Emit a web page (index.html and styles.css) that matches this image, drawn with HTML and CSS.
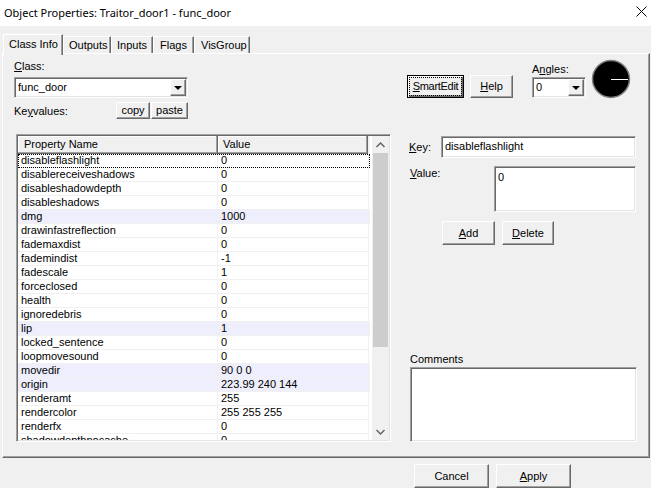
FILE: index.html
```html
<!DOCTYPE html>
<html>
<head>
<meta charset="utf-8">
<link rel="stylesheet" href="styles.css">
</head>
<body>
<div class="window">
  <div class="titlebar">
    <span class="title">Object Properties: Traitor_door1 - func_door</span>
    <svg class="close" width="11" height="11" viewBox="0 0 11 11"><path d="M0.5 0.5 L10.5 10.5 M10.5 0.5 L0.5 10.5" stroke="#000" stroke-width="1" fill="none"/></svg>
  </div>
  <div class="tabs">
    <div class="tab active">Class Info</div>
    <div class="tab">Outputs</div>
    <div class="tab">Inputs</div>
    <div class="tab">Flags</div>
    <div class="tab">VisGroup</div>
  </div>
  <div class="page">
    <div class="leftcol">
      <div class="lbl"><u>C</u>lass:</div>
      <div class="combo classcombo"><span class="combo-text">func_door</span><span class="dropbtn"><span class="tri"></span></span></div>
      <div class="kvrow">
        <div class="kvlabel">Ke<u>y</u>values:</div>
        <div class="btn small copy">copy</div>
        <div class="btn small paste">paste</div>
      </div>
      <div class="list">
        <div class="listmain">
          <div class="header">
            <div class="hcell hname">Property Name</div>
            <div class="hcell hvalue">Value</div>
          </div>
          <div class="rows">
            <div class="row focus"><div class="c1">disableflashlight</div><div class="c2">0</div></div>
            <div class="row"><div class="c1">disablereceiveshadows</div><div class="c2">0</div></div>
            <div class="row"><div class="c1">disableshadowdepth</div><div class="c2">0</div></div>
            <div class="row"><div class="c1">disableshadows</div><div class="c2">0</div></div>
            <div class="row hl"><div class="c1">dmg</div><div class="c2">1000</div></div>
            <div class="row"><div class="c1">drawinfastreflection</div><div class="c2">0</div></div>
            <div class="row"><div class="c1">fademaxdist</div><div class="c2">0</div></div>
            <div class="row"><div class="c1">fademindist</div><div class="c2">-1</div></div>
            <div class="row"><div class="c1">fadescale</div><div class="c2">1</div></div>
            <div class="row"><div class="c1">forceclosed</div><div class="c2">0</div></div>
            <div class="row"><div class="c1">health</div><div class="c2">0</div></div>
            <div class="row"><div class="c1">ignoredebris</div><div class="c2">0</div></div>
            <div class="row hl"><div class="c1">lip</div><div class="c2">1</div></div>
            <div class="row"><div class="c1">locked_sentence</div><div class="c2">0</div></div>
            <div class="row"><div class="c1">loopmovesound</div><div class="c2">0</div></div>
            <div class="row hl"><div class="c1">movedir</div><div class="c2">90 0 0</div></div>
            <div class="row hl"><div class="c1">origin</div><div class="c2">223.99 240 144</div></div>
            <div class="row"><div class="c1">renderamt</div><div class="c2">255</div></div>
            <div class="row"><div class="c1">rendercolor</div><div class="c2">255 255 255</div></div>
            <div class="row"><div class="c1">renderfx</div><div class="c2">0</div></div>
            <div class="row"><div class="c1">shadowdepthnocache</div><div class="c2">0</div></div>
          </div>
        </div>
        <div class="vscroll">
          <div class="sarrow"><svg width="9" height="6" viewBox="0 0 9 6"><path d="M0.5 5 L4.5 1 L8.5 5" stroke="#606060" stroke-width="1.4" fill="none"/></svg></div>
          <div class="strack"><div class="thumb"></div></div>
          <div class="sarrow"><svg width="9" height="6" viewBox="0 0 9 6"><path d="M0.5 1 L4.5 5 L8.5 1" stroke="#606060" stroke-width="1.4" fill="none"/></svg></div>
        </div>
      </div>
    </div>
    <div class="rightcol">
      <div class="toprow">
        <div class="btn default smartedit"><span class="focusbox"><u>S</u>martEdit</span></div>
        <div class="btn help"><u>H</u>elp</div>
        <div class="angles">
          <div class="lbl">A<u>n</u>gles:</div>
          <div class="combo anglecombo"><span class="combo-text">0</span><span class="dropbtn"><span class="tri"></span></span></div>
        </div>
        <svg class="dial" width="40" height="40" viewBox="0 0 40 40">
          <circle cx="20" cy="20" r="18.5" fill="#000" stroke="#808080" stroke-width="1.5"/>
          <line x1="20" y1="20.5" x2="37" y2="20.5" stroke="#fff" stroke-width="1"/>
        </svg>
      </div>
      <div class="keyrow">
        <div class="lbl keylbl"><u>K</u>ey:</div>
        <div class="field keyfield">disableflashlight</div>
      </div>
      <div class="valrow">
        <div class="lbl vallbl"><u>V</u>alue:</div>
        <div class="field valfield">0</div>
      </div>
      <div class="adrow">
        <div class="btn add"><u>A</u>dd</div>
        <div class="btn del"><u>D</u>elete</div>
      </div>
      <div class="lbl commentslbl">Comments</div>
      <div class="field comments"></div>
    </div>
  </div>
  <div class="footer">
    <div class="btn foot">Cancel</div>
    <div class="btn foot"><u>A</u>pply</div>
  </div>
</div>
</body>
</html>
```
FILE: styles.css
```css
* { box-sizing: border-box; }
html, body { margin: 0; padding: 0; }
body {
  background: #f0f0f0;
  font-family: "Liberation Sans", Arial, sans-serif;
  font-size: 11px;
  color: #000;
  overflow: hidden;
}
u { text-decoration: underline; text-underline-offset: 1px; }
.window { width: 651px; height: 488px; overflow: hidden; }

.titlebar {
  height: 26px;
  background: #fff;
  display: flex;
  align-items: center;
  justify-content: space-between;
  padding: 0 4px 0 4px;
}
.title {
  font-family: "Noto Sans", "Open Sans", sans-serif;
  font-size: 11px;
  position: relative;
  top: -1px;
}
.close { position: relative; top: -2px; }

.tabs {
  display: flex;
  align-items: flex-end;
  height: 27px;
  padding-left: 3px;
}
.tab {
  height: 18px;
  padding: 2px 0 0 5px;
  line-height: 13px;
  white-space: nowrap;
  border-top: 1px solid #fff;
  border-left: 1px solid #fff;
  border-right: 1px solid #696969;
  box-shadow: inset -1px 0 #a0a0a0;
  margin-bottom: -1px;
  position: relative;
}
.tab.active {
  height: 21px;
  padding: 3px 0 0 5px;
  z-index: 2;
  background: #f0f0f0;
  margin-bottom: -2px;
  width: 60px;
}
.tab:nth-child(2) { width: 48px; }
.tab:nth-child(3) { width: 42px; }
.tab:nth-child(4) { width: 41px; padding-left: 6px; }
.tab:nth-child(5) { width: 56px; padding-left: 6px; }

.page {
  margin-left: 2px;
  width: 648px;
  height: 405px;
  border-top: 1px solid #fff;
  border-left: 1px solid #fff;
  border-right: 1px solid #696969;
  border-bottom: 1px solid #696969;
  box-shadow: inset -1px -1px #a0a0a0;
  display: flex;
  padding: 6px 0 0 11px;
  position: relative;
  z-index: 1;
}
.lbl { line-height: 13px; height: 13px; white-space: nowrap; }

.leftcol { width: 377px; display: flex; flex-direction: column; }

.combo {
  height: 21px;
  background: #fff;
  border: 1px solid;
  border-color: #a0a0a0 #fff #fff #a0a0a0;
  box-shadow: inset 1px 1px #696969, inset -1px -1px #e3e3e3;
  display: flex;
  align-items: center;
  justify-content: space-between;
  padding: 1px 1px 1px 3px;
}
.classcombo { width: 174px; margin-top: 4px; }
.combo-text { line-height: 13px; }
.dropbtn {
  width: 16px;
  height: 17px;
  background: #f0f0f0;
  border: 1px solid;
  border-color: #fff #696969 #696969 #fff;
  box-shadow: inset -1px -1px #a0a0a0;
  display: flex;
  align-items: center;
  justify-content: center;
}
.tri {
  width: 0; height: 0;
  border-left: 4px solid transparent;
  border-right: 4px solid transparent;
  border-top: 4px solid #000;
  margin-left: -1px;
}

.btn {
  background: #f0f0f0;
  border: 1px solid;
  border-color: #fff #696969 #696969 #fff;
  box-shadow: inset -1px -1px #a0a0a0;
  display: flex;
  align-items: center;
  justify-content: center;
  line-height: 13px;
  white-space: nowrap;
}
.kvrow { display: flex; align-items: flex-end; margin-top: 4px; height: 17px; }
.kvlabel { width: 102px; line-height: 13px; margin-bottom: 1px; }
.btn.small { height: 17px; padding-bottom: 1px; }
.copy { width: 34px; }
.paste { width: 37px; margin-left: 1px; }

.list {
  margin-top: 15px;
  margin-left: 2px;
  width: 375px;
  height: 308px;
  background: #fff;
  border: 1px solid;
  border-color: #a0a0a0 #fff #fff #a0a0a0;
  box-shadow: inset 1px 1px #696969, inset -1px -1px #e3e3e3;
  padding: 1px;
  display: flex;
  overflow: hidden;
}
.listmain { width: 354px; overflow: hidden; }
.header { display: flex; height: 18px; background: #f0f0f0; }
.hcell {
  height: 18px;
  border-right: 1px solid #696969;
  border-bottom: 1px solid #696969;
  box-shadow: inset -1px -1px #a0a0a0, inset 1px 1px #fff;
  padding: 2px 0 0 6px;
  line-height: 13px;
}
.hname { width: 200px; }
.hvalue { width: 150px; padding-left: 5px; }
.rows { display: flex; flex-direction: column; }
.row { display: flex; height: 14px; flex: none; }
.row.hl { background: #eeeefc; }
.row.focus { outline: 1px dotted #000; outline-offset: -1px; }
.c1, .c2 {
  height: 14px;
  line-height: 13px;
  border-right: 1px solid #f0f0f0;
  border-bottom: 1px solid #f0f0f0;
  white-space: nowrap;
  overflow: hidden;
}
.c1 { width: 200px; padding-left: 3px; }
.c2 { width: 151px; padding-left: 3px; }

.vscroll {
  width: 17px;
  margin-left: 2px;
  display: flex;
  flex-direction: column;
  background: #f0f0f0;
}
.sarrow { height: 17px; display: flex; align-items: center; justify-content: center; }
.strack { flex: 1; }
.thumb { margin: 0 1px; height: 194px; background: #cdcdcd; }

.rightcol { margin-left: 16px; width: 230px; display: flex; flex-direction: column; }
.toprow { display: flex; align-items: flex-start; height: 40px; }
.smartedit {
  margin-top: 15px;
  width: 57px;
  height: 23px;
  border: 1px solid #000;
  box-shadow: inset 1px 1px #fff, inset -1px -1px #696969, inset -2px -2px #a0a0a0;
  padding: 2px;
}
.focusbox {
  width: 100%;
  height: 100%;
  outline: 1px dotted #000;
  display: flex;
  align-items: center;
  justify-content: center;
  letter-spacing: -0.3px;
}
.help { margin-top: 15px; margin-left: 6px; width: 43px; height: 23px; }
.angles { margin-left: 19px; margin-top: 3px; display: flex; flex-direction: column; }
.anglecombo { width: 54px; margin-top: 1px; }
.dial { margin-left: 5px; margin-top: -1px; }

.field {
  background: #fff;
  border: 1px solid;
  border-color: #a0a0a0 #fff #fff #a0a0a0;
  box-shadow: inset 1px 1px #696969, inset -1px -1px #e3e3e3;
  line-height: 13px;
  padding: 3px 3px;
}
.keyrow { display: flex; align-items: center; margin-top: 36px; height: 22px; }
.keylbl { width: 32px; margin-left: 2px; }
.keyfield { width: 195px; height: 22px; }
.valrow { display: flex; margin-top: 8px; }
.vallbl { width: 84px; margin-left: 3px; margin-top: 1px; }
.valfield { width: 142px; height: 46px; padding-top: 4px; }
.adrow { display: flex; margin-top: 9px; margin-left: 35px; }
.add { width: 53px; height: 24px; }
.del { width: 52px; height: 24px; margin-left: 7px; }
.commentslbl { margin-top: 108px; margin-left: 3px; }
.comments { margin-left: 3px; margin-top: 1px; width: 227px; height: 75px; }

.footer { display: flex; padding-left: 414px; padding-top: 6px; }
.btn.foot { width: 75px; height: 24px; margin-right: 7px; }
```
